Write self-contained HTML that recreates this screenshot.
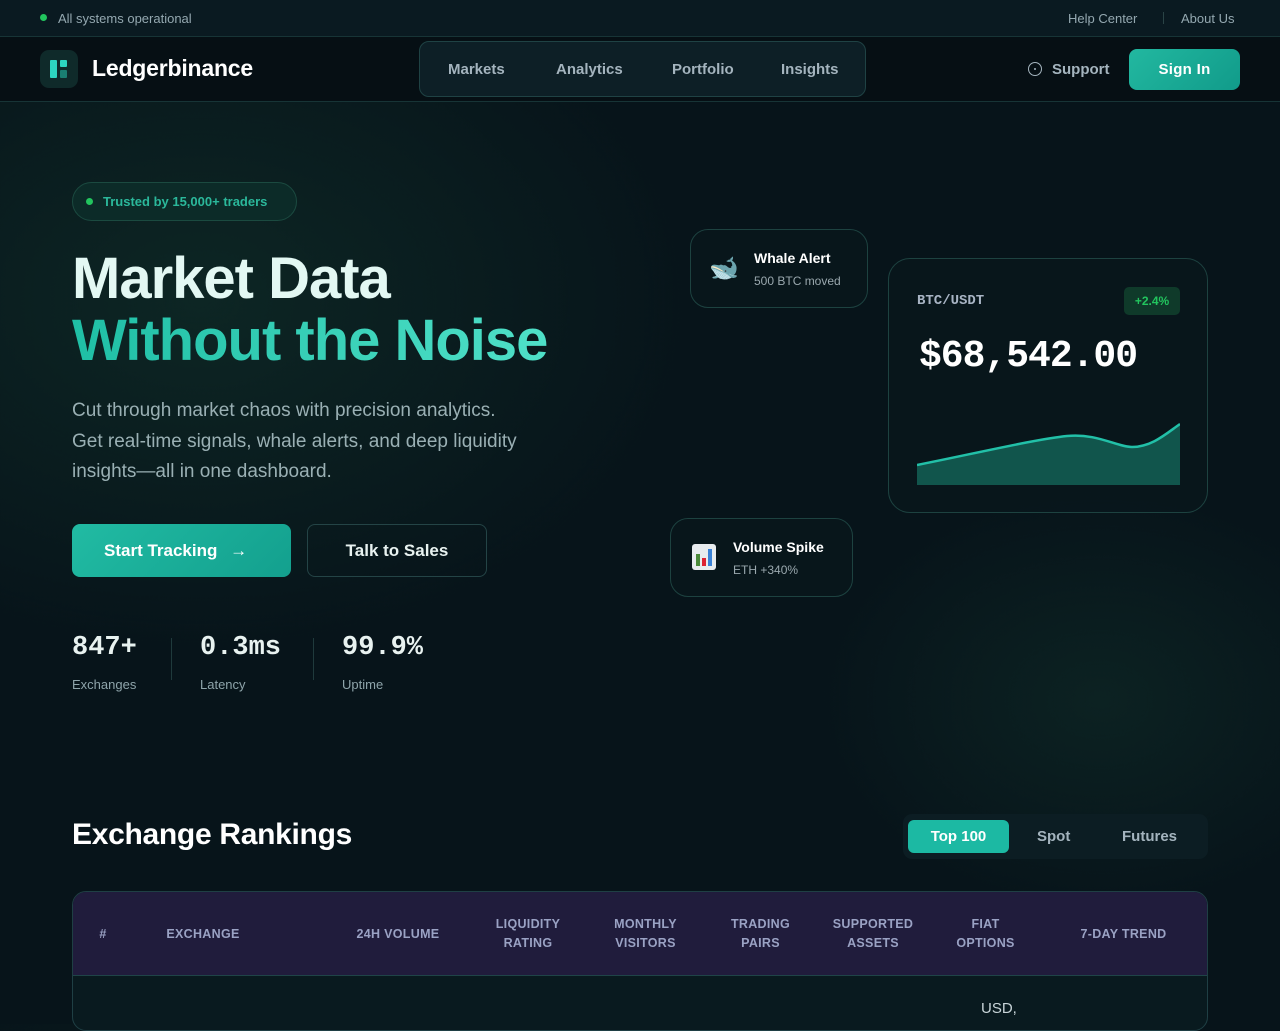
<!DOCTYPE html>
<html><head><meta charset="utf-8"><style>
*{box-sizing:border-box;margin:0;padding:0}
body{width:1280px;height:1024px;overflow:hidden;font-family:"Liberation Sans",sans-serif;color:#e6f4f1;
background:radial-gradient(ellipse 700px 500px at 200px 300px,#0d2624 0%,rgba(10,25,28,0) 70%),radial-gradient(ellipse 400px 300px at 1100px 700px,#0c2222 0%,rgba(0,0,0,0) 70%),#07141a;position:relative}
.abs{position:absolute}
.top{top:0;left:0;width:1280px;height:37px;background:#0a1a21;border-bottom:1px solid #173436;font-size:13px;color:#94a8b0}
.hdr{top:37px;left:0;width:1280px;height:65px;background:#060f14;border-bottom:1px solid #173436}
.card{border:1px solid #1d4240;background:rgba(8,22,28,.85);border-radius:18px}
.mono{font-family:"Liberation Mono",monospace;font-weight:bold}
th{font-size:12.5px;color:#9aa2c4;font-weight:bold;letter-spacing:.3px;line-height:19px}
</style></head><body>
<div class="abs top">
 <div class="abs" style="left:40px;top:14px;width:7px;height:7px;border-radius:50%;background:#22c55e"></div>
 <div class="abs" style="left:58px;top:11px">All systems operational</div>
 <div class="abs" style="left:1068px;top:11px">Help Center</div>
 <div class="abs" style="left:1163px;top:12px;width:1px;height:12px;background:#2a4446"></div>
 <div class="abs" style="left:1181px;top:11px">About Us</div>
</div>
<div class="abs hdr">
 <div class="abs" style="left:40px;top:13px;width:38px;height:38px;border-radius:9px;background:#0f2a2a">
  <div class="abs" style="left:10px;top:10px;width:7px;height:18px;background:#2dd4bf;border-radius:1px"></div>
  <div class="abs" style="left:20px;top:10px;width:7px;height:7px;background:#2dd4bf;border-radius:1px"></div>
  <div class="abs" style="left:20px;top:20px;width:7px;height:8px;background:#1a7f72;border-radius:1px"></div>
 </div>
 <div class="abs" style="left:92px;top:18px;font-size:23px;font-weight:bold;color:#fff;letter-spacing:-.2px">Ledgerbinance</div>
 <div class="abs" style="left:419px;top:4px;width:447px;height:56px;border:1px solid #1f4244;border-radius:10px;background:#0d1f26;font-size:15px;font-weight:bold;color:#a4b4be">
  <span class="abs" style="left:28px;top:19px">Markets</span>
  <span class="abs" style="left:136px;top:19px">Analytics</span>
  <span class="abs" style="left:252px;top:19px">Portfolio</span>
  <span class="abs" style="left:361px;top:19px">Insights</span>
 </div>
 <div class="abs" style="left:1028px;top:25px;width:14px;height:14px;border:1.5px solid #a4b4be;border-radius:50%"><div class="abs" style="left:4.5px;top:4.5px;width:2px;height:2px;background:#a4b4be;border-radius:50%"></div></div>
 <div class="abs" style="left:1052px;top:24px;font-size:15px;font-weight:bold;color:#a4b4be">Support</div>
 <div class="abs" style="left:1129px;top:12px;width:111px;height:41px;border-radius:8px;background:linear-gradient(135deg,#22b8a0,#119b8a);font-size:15px;font-weight:bold;color:#fff;text-align:center;line-height:41px;letter-spacing:.3px">Sign In</div>
</div>

<div class="abs" style="left:72px;top:182px;width:225px;height:39px;border:1px solid #1b4a40;border-radius:20px;background:#0c2b28;font-size:13px;font-weight:bold;color:#2bb89b">
 <div class="abs" style="left:13px;top:15px;width:7px;height:7px;border-radius:50%;background:#22c55e"></div>
 <div class="abs" style="left:30px;top:11px">Trusted by 15,000+ traders</div>
</div>
<div class="abs" style="left:72px;top:248px;font-size:58px;font-weight:bold;letter-spacing:-1px;line-height:62px;color:#e3f8f3">Market Data</div>
<div class="abs" style="left:72px;top:310px;font-size:58px;font-weight:bold;letter-spacing:-1px;line-height:62px;background:linear-gradient(90deg,#1fbfa5,#4fe0c8);-webkit-background-clip:text;color:transparent">Without the Noise</div>
<div class="abs" style="left:72px;top:396px;width:520px;font-size:19px;line-height:30.5px;color:#9ab0b4">Cut through market chaos with precision analytics.<br>Get real-time signals, whale alerts, and deep liquidity<br>insights—all in one dashboard.</div>
<div class="abs" style="left:72px;top:524px;width:219px;height:53px;border-radius:8px;background:linear-gradient(135deg,#21bba3,#13a08e);font-size:17px;font-weight:bold;color:#fff;line-height:53px;padding-left:32px">Start Tracking <span style="margin-left:8px">→</span></div>
<div class="abs" style="left:307px;top:524px;width:180px;height:53px;border-radius:8px;border:1px solid #244446;font-size:17px;font-weight:bold;color:#e8f2f0;line-height:51px;text-align:center">Talk to Sales</div>

<div class="abs mono" style="left:72px;top:633px;font-size:27px;color:#e8f2f0">847+</div>
<div class="abs" style="left:72px;top:677px;font-size:13px;color:#8ea4aa">Exchanges</div>
<div class="abs" style="left:171px;top:638px;width:1px;height:42px;background:#1f3a3c"></div>
<div class="abs mono" style="left:200px;top:633px;font-size:27px;color:#e8f2f0">0.3ms</div>
<div class="abs" style="left:200px;top:677px;font-size:13px;color:#8ea4aa">Latency</div>
<div class="abs" style="left:313px;top:638px;width:1px;height:42px;background:#1f3a3c"></div>
<div class="abs mono" style="left:342px;top:633px;font-size:27px;color:#e8f2f0">99.9%</div>
<div class="abs" style="left:342px;top:677px;font-size:13px;color:#8ea4aa">Uptime</div>

<div class="abs card" style="left:690px;top:229px;width:178px;height:79px">
 <div class="abs" style="left:18px;top:24px;font-size:24px">🐋</div>
 <div class="abs" style="left:63px;top:20px;font-size:14px;font-weight:bold;color:#fff">Whale Alert</div>
 <div class="abs" style="left:63px;top:44px;font-size:12px;color:#9aa8ae">500 BTC moved</div>
</div>
<div class="abs card" style="left:670px;top:518px;width:183px;height:79px">
 <svg class="abs" style="left:20px;top:24px" width="26" height="28" viewBox="0 0 26 28"><rect x="1" y="1" width="24" height="26" rx="3" fill="#e8ecef"/><rect x="5" y="11" width="4" height="12" fill="#4a8a3a"/><rect x="11" y="15" width="4" height="8" fill="#d23"/><rect x="17" y="6" width="4" height="17" fill="#3b82d6"/></svg>
 <div class="abs" style="left:62px;top:20px;font-size:14px;font-weight:bold;color:#fff">Volume Spike</div>
 <div class="abs" style="left:62px;top:44px;font-size:12px;color:#9aa8ae">ETH +340%</div>
</div>
<div class="abs card" style="left:888px;top:258px;width:320px;height:255px;border-radius:22px">
 <div class="abs mono" style="left:28px;top:34px;font-size:14px;color:#a8b4c4">BTC/USDT</div>
 <div class="abs" style="left:235px;top:28px;width:56px;height:28px;border-radius:5px;background:#0f3a2a;color:#22c55e;font-size:12px;font-weight:bold;text-align:center;line-height:28px">+2.4%</div>
 <div class="abs mono" style="left:30px;top:76px;font-size:38px;color:#fff;letter-spacing:-1px">$68,542.00</div>
 <svg class="abs" style="left:28px;top:160px" width="263" height="66" viewBox="0 0 263 66"><path d="M0 46 C60 34 120 20 150 17 C180 14 200 28 215 28 C235 28 250 14 263 5 L263 66 L0 66Z" fill="#11554c"/><path d="M0 46 C60 34 120 20 150 17 C180 14 200 28 215 28 C235 28 250 14 263 5" fill="none" stroke="#22c0a8" stroke-width="2.5"/></svg>
</div>

<div class="abs" style="left:72px;top:818px;font-size:30px;font-weight:bold;color:#fff;letter-spacing:-.3px">Exchange Rankings</div>
<div class="abs" style="left:903px;top:814px;width:305px;height:45px;border-radius:9px;background:#0c1d23;font-size:15px;font-weight:bold;color:#a4b4be">
 <div class="abs" style="left:5px;top:6px;width:101px;height:33px;border-radius:6px;background:#1cb9a3;color:#fff;text-align:center;line-height:33px">Top 100</div>
 <div class="abs" style="left:134px;top:14px">Spot</div>
 <div class="abs" style="left:219px;top:14px">Futures</div>
</div>
<div class="abs" style="left:72px;top:891px;width:1136px;height:140px;border:1px solid #1f3f44;border-radius:14px;background:#091a1f;overflow:hidden">
 <div class="abs" style="left:0;top:0;width:1136px;height:84px;background:#201c3c;border-bottom:1px solid #1f4448"></div>
 <table class="abs" style="left:0;top:0;width:1136px;height:84px;border-collapse:collapse"><tr>
  <th style="width:60px">#</th><th style="width:170px;padding-right:30px">EXCHANGE</th><th style="width:170px;padding-left:20px">24H VOLUME</th><th style="width:110px">LIQUIDITY<br>RATING</th><th style="width:125px">MONTHLY<br>VISITORS</th><th style="width:105px">TRADING<br>PAIRS</th><th style="width:120px">SUPPORTED<br>ASSETS</th><th style="width:105px">FIAT<br>OPTIONS</th><th>7-DAY TREND</th></tr></table>
 <div class="abs" style="left:908px;top:108px;font-size:15px;color:#c8d4d8">USD,</div>
</div>
</body></html>
